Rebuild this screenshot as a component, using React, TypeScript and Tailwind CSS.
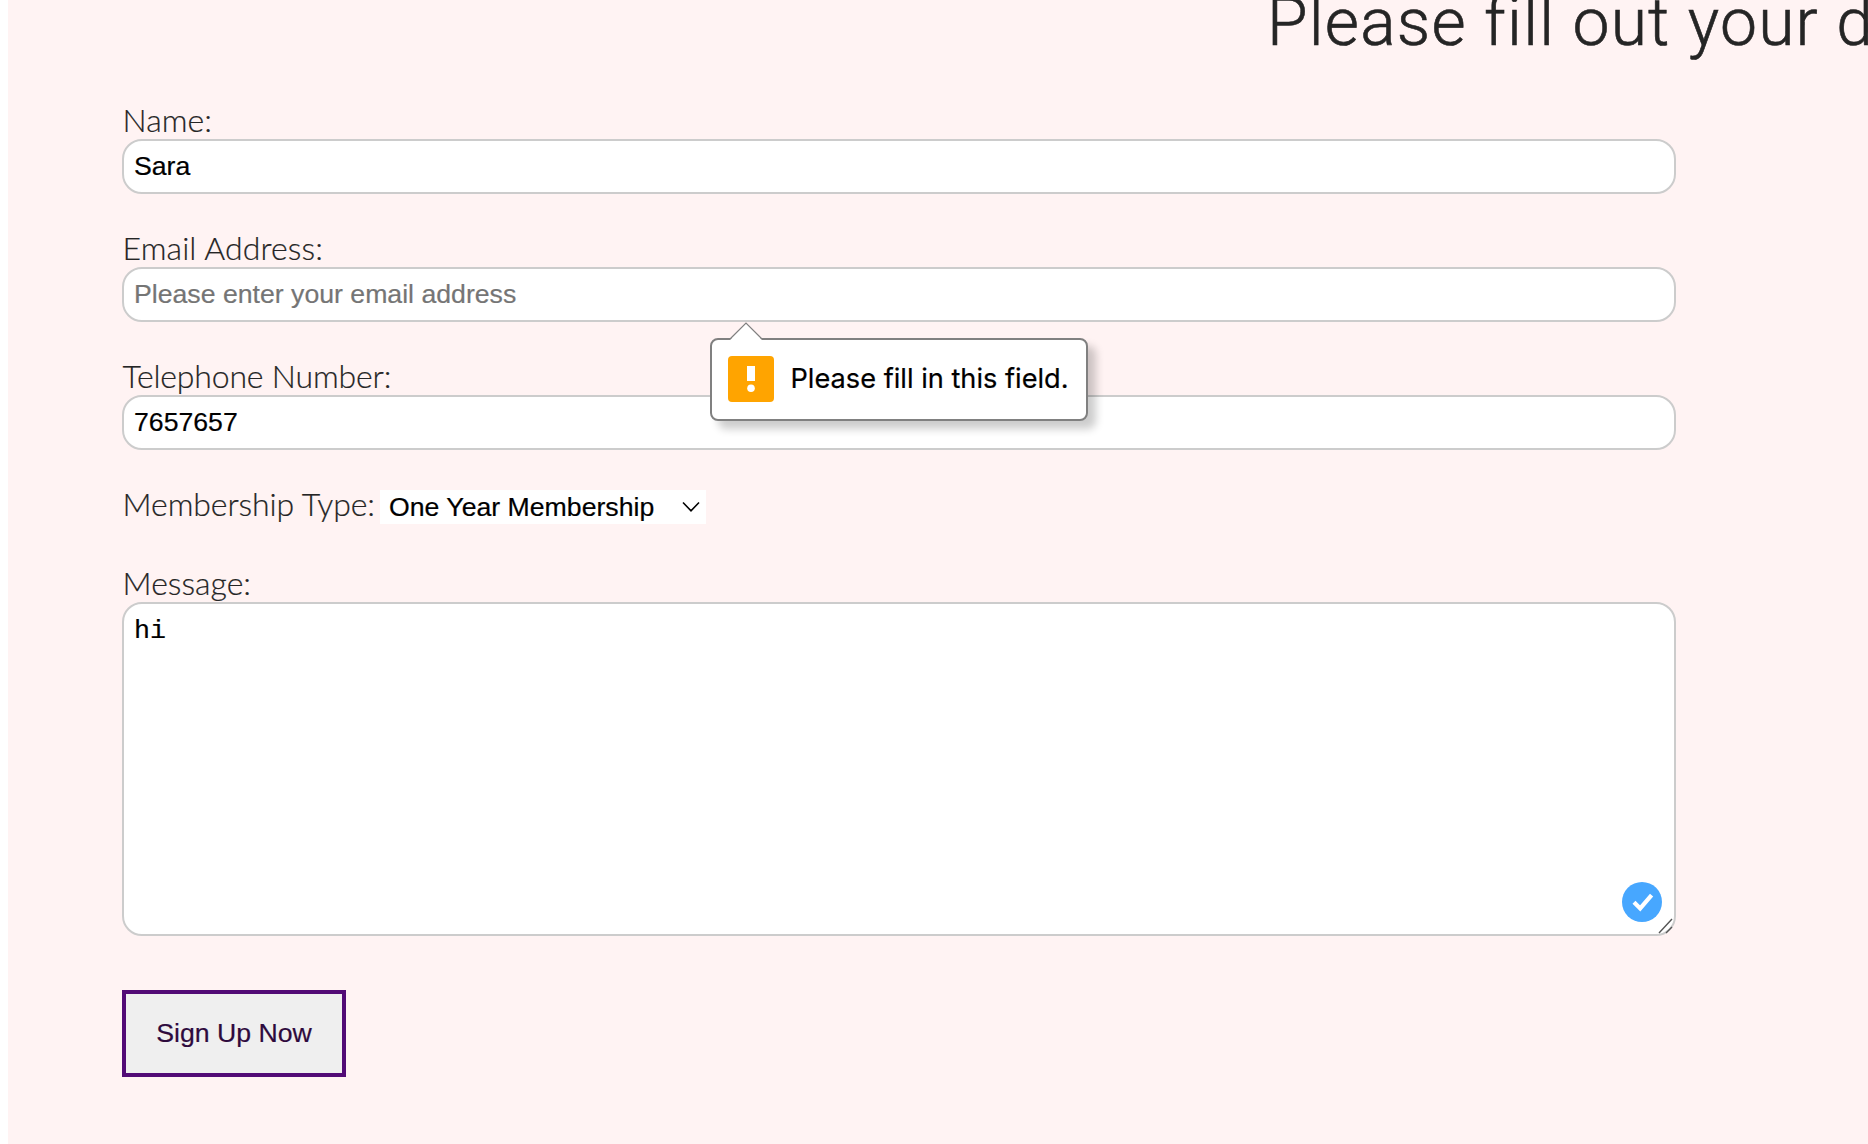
import type { ReactNode } from "react";

const inputClass =
  "block h-[55px] w-full rounded-[20px] border-2 border-[#ccc] bg-white px-[10px] pb-px font-['Liberation_Sans',Arial,sans-serif] text-[26.67px] font-normal text-black outline-none placeholder:text-[#757575] placeholder:opacity-100 [-webkit-text-stroke:0.2px]";

function Field({
  label,
  tracking = "tracking-normal",
  children,
}: {
  label: string;
  tracking?: string;
  children: ReactNode;
}) {
  return (
    <div className="relative mb-[34px]">
      <label className={`block h-[39px] pl-[0.6px] leading-[39px] whitespace-nowrap ${tracking}`}>{label}</label>
      {children}
    </div>
  );
}

function ValidationTip() {
  return (
    <div className="absolute top-[110px] left-[588px] z-10 flex h-[83px] w-[378px] items-center rounded-[8px] border-2 border-[#808080] bg-white pb-px pl-4 font-normal shadow-[8px_8px_8px_rgba(0,0,0,0.2)]">
      <svg className="absolute -top-[18px] left-[17px]" width="34" height="18" viewBox="0 0 34 18">
        <path d="M1 18 L17 1 L33 18Z" fill="white" />
        <path d="M1 17 L17 1 L33 17" fill="none" stroke="#808080" strokeWidth="1.2" />
      </svg>
      <svg width="46" height="46" viewBox="0 0 46 46">
        <rect width="46" height="46" rx="4" fill="#ffa400" />
        <rect x="19" y="10" width="8" height="15" fill="white" />
        <circle cx="23" cy="32.3" r="3.8" fill="white" />
      </svg>
      <span className="mt-px ml-[16.5px] font-[Inter,sans-serif] text-[27.2px] whitespace-nowrap text-black">
        Please fill in this field.
      </span>
    </div>
  );
}

export default function App() {
  return (
    <div className="h-[1144px] w-full overflow-hidden bg-white pl-2">
      <main className="h-full overflow-hidden bg-[#fff3f3] pl-[114px] font-[Lato,sans-serif] text-[32px] font-light text-[#252525] [-webkit-text-stroke:0.2px]">
        <h1 className="-mt-[15px] h-[115px] pl-[1145px] font-[Roboto,sans-serif] text-[66px] leading-[76px] font-light tracking-[1.2px] whitespace-nowrap [-webkit-text-stroke:0.6px]">
          Please fill out your details
        </h1>
        <form className="w-[1554px]" onSubmit={(e) => e.preventDefault()}>
          <Field label="Name:">
            <input className={inputClass} defaultValue="Sara" />
          </Field>
          <Field label="Email Address:" tracking="tracking-[0.1px]">
            <input className={inputClass} placeholder="Please enter your email address" />
            <ValidationTip />
          </Field>
          <Field label="Telephone Number:" tracking="tracking-[-0.18px]">
            <input className={inputClass} defaultValue="7657657" />
          </Field>
          <div className="flex h-[40px] items-start">
            <label className="w-[258px] pl-[0.6px] leading-[39px] tracking-[-0.1px] whitespace-nowrap">
              Membership Type:
            </label>
            <div className="mt-[6px] flex h-[34px] w-[326px] items-center justify-between bg-white pr-[6px] pl-[9px] font-['Liberation_Sans',Arial,sans-serif] text-[26.67px] leading-[34px] font-normal whitespace-nowrap text-black">
              <span>One Year Membership</span>
              <svg width="18" height="12" viewBox="0 0 18 12" fill="none" stroke="black" strokeWidth="1.6">
                <path d="M1 1.5 L9 9.8 L17 1.5" />
              </svg>
            </div>
          </div>
          <div className="relative mt-[39px]">
            <label className="block h-[39px] pl-[0.6px] leading-[39px]">Message:</label>
            <textarea
              className="block h-[334px] w-full resize-none rounded-[20px] border-2 border-[#ccc] bg-white px-[10px] py-[12px] font-['Liberation_Mono','Courier_New',monospace] text-[26.67px] leading-[30px] font-normal text-black outline-none"
              defaultValue="hi"
            />
            <svg className="absolute right-[14px] bottom-[14px]" width="40" height="40" viewBox="0 0 40 40">
              <circle cx="20" cy="20" r="20" fill="#47a7ff" />
              <path d="M12 20.2 L18.2 26.4 L29.6 13.2" fill="none" stroke="white" strokeWidth="4.2" />
            </svg>
            <svg
              className="absolute right-[3px] bottom-[2px]"
              width="15"
              height="16"
              viewBox="0 0 15 16"
              stroke="#555"
              strokeWidth="1.4"
            >
              <path d="M1 15 L14 1 M8 15 L14 9" />
            </svg>
          </div>
          <button className="mt-[54px] flex h-[87px] w-[224px] items-center justify-center border-4 border-[#520b76] bg-[#efefef] pb-[2px] font-['Liberation_Sans',Arial,sans-serif] text-[26.67px] font-normal whitespace-nowrap text-[#2e0a3d]">
            Sign Up Now
          </button>
        </form>
      </main>
    </div>
  );
}
